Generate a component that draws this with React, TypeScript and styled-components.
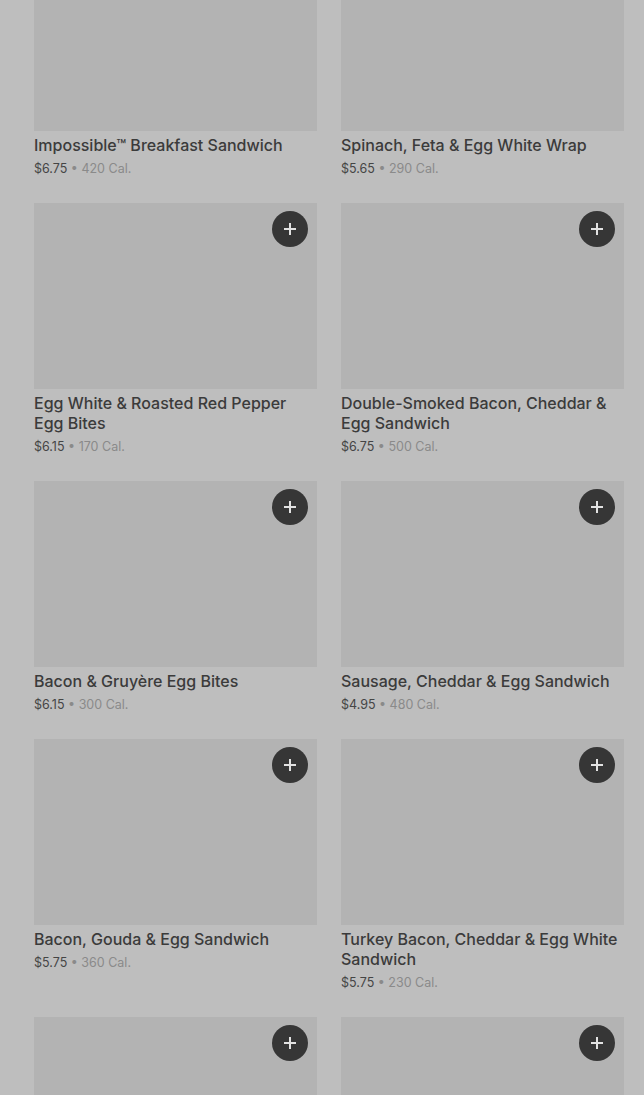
import React from "react";
import styled, { createGlobalStyle } from "styled-components";

const Global = createGlobalStyle`
  html, body { margin: 0; padding: 0; background: #bebebe; }
  body { font-family: Inter, "Noto Sans", Arial, sans-serif; overflow: hidden; }
`;

const Page = styled.div`
  width: 644px;
  height: 1095px;
  overflow: hidden;
  background: #bebebe;
`;

const Grid = styled.div`
  display: grid;
  grid-template-columns: 283px 283px;
  column-gap: 24px;
  row-gap: 24px;
  padding: 0 20px 0 34px;
  margin-top: -55px;
`;

const Card = styled.div`
  display: flex;
  flex-direction: column;
`;

const Thumb = styled.div`
  position: relative;
  flex: none;
  height: 186px;
  background: #b3b3b3;
`;

const AddButton = styled.button`
  position: absolute;
  top: 8px;
  right: 9px;
  width: 36px;
  height: 36px;
  border-radius: 50%;
  border: none;
  background: #363636;
  display: flex;
  align-items: center;
  justify-content: center;
  padding: 0;
`;

const Title = styled.div`
  margin-top: 4px;
  font-size: 16px;
  line-height: 20px;
  font-weight: 500;
  color: #3b3b3b;
`;

const Meta = styled.div`
  margin-top: 4px;
  font-size: 12.5px;
  line-height: 20px;
  color: #8a8a8a;
`;

const Price = styled.span`
  color: #454545;
`;

const items = [
  ["Impossible™ Breakfast Sandwich", "$6.75", "420"],
  ["Spinach, Feta & Egg White Wrap", "$5.65", "290"],
  ["Egg White & Roasted Red Pepper Egg Bites", "$6.15", "170"],
  ["Double-Smoked Bacon, Cheddar & Egg Sandwich", "$6.75", "500"],
  ["Bacon & Gruyère Egg Bites", "$6.15", "300"],
  ["Sausage, Cheddar & Egg Sandwich", "$4.95", "480"],
  ["Bacon, Gouda & Egg Sandwich", "$5.75", "360"],
  ["Turkey Bacon, Cheddar & Egg White Sandwich", "$5.75", "230"],
  ["", "", ""],
  ["", "", ""],
];

const Plus = () => (
  <svg width="14" height="14" viewBox="0 0 14 14">
    <path d="M7 1v12M1 7h12" stroke="#e2e2e2" strokeWidth="2" />
  </svg>
);

export default function App() {
  return (
    <Page>
      <Global />
      <Grid>
        {items.map(([t, p, c], i) => (
          <Card key={i}>
            <Thumb>{i >= 2 && <AddButton aria-label="Add"><Plus /></AddButton>}</Thumb>
            {t && <Title>{t}</Title>}
            {t && (
              <Meta>
                <Price>{p}</Price> • {c} Cal.
              </Meta>
            )}
          </Card>
        ))}
      </Grid>
    </Page>
  );
}
